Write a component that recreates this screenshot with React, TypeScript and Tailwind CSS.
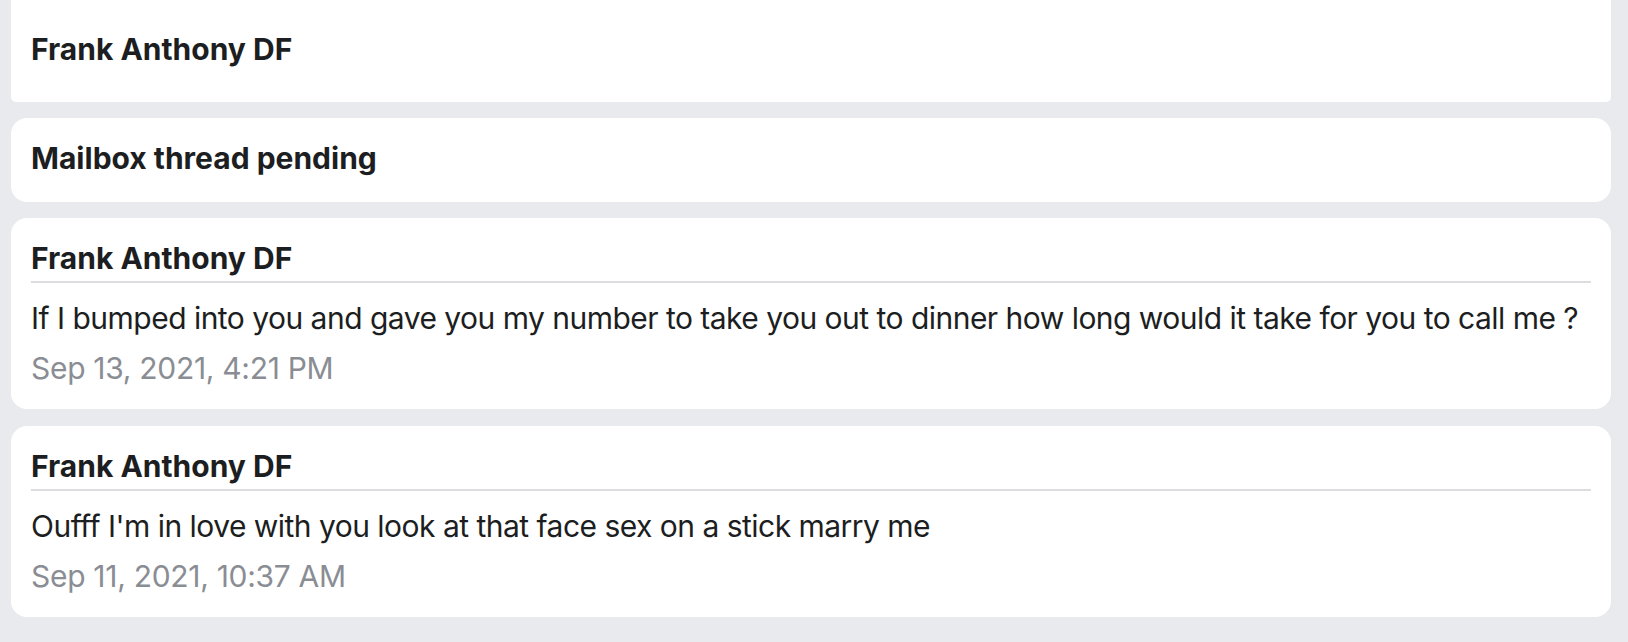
const messages = [
  {
    author: "Frank Anthony DF",
    body: "If I bumped into you and gave you my number to take you out to dinner how long would it take for you to call me ?",
    date: "Sep 13, 2021, 4:21 PM",
  },
  {
    author: "Frank Anthony DF",
    body: "Oufff I'm in love with you look at that face sex on a stick marry me",
    date: "Sep 11, 2021, 10:37 AM",
  },
];

function MessageCard({ author, body, date, last }: { author: string; body: string; date: string; last?: boolean }) {
  return (
    <div className={last ? "bg-white rounded-2xl px-5 pt-[22px] pb-[23px] mt-px" : "bg-white rounded-2xl px-5 pt-[22px] pb-[23px]"}>
      {/* Header */}
      <div className="text-[30px] leading-[36px] font-bold text-[#1c1e21]">{author}</div>
      <div className="mt-[5px] h-[2px] bg-[#dcdde1]" />

      {/* Message */}
      <p className="mt-[17px] text-[30px] leading-[36px] tracking-[-0.52px] text-[#1c1e21]">{body}</p>
      <p className="mt-[14px] text-[30px] leading-[36px] tracking-[-0.3px] text-[#8a8d93]">{date}</p>
    </div>
  );
}

export default function App() {
  return (
    <div
      className="min-h-[642px] bg-[#e9eaed] pl-[11px] pr-[17px] pb-[25px] flex flex-col gap-4"
      style={{ fontFamily: "Inter, 'Noto Sans', sans-serif" }}
    >
      <div className="bg-white rounded-b-[5px] px-5 pt-[31px] pb-[35px]">
        <div className="text-[30px] leading-[36px] font-bold text-[#1c1e21]">Frank Anthony DF</div>
      </div>

      <div className="bg-white rounded-2xl px-5 pt-[22px] pb-[26px]">
        <div className="text-[30px] leading-[36px] font-bold text-[#1c1e21]">Mailbox thread pending</div>
      </div>

      {messages.map((m, i) => (
        <MessageCard key={i} {...m} last={i === messages.length - 1} />
      ))}
    </div>
  );
}
